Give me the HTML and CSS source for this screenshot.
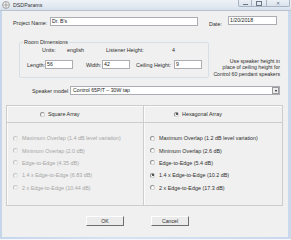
FILE: index.html
```html
<!DOCTYPE html>
<html lang="en">
<head>
  <meta charset="UTF-8" />
  <title>DSDParams</title>
  <link rel="stylesheet" href="styles.css">
</head>
<body>
  <div class="window">
    <div class="titlebar">
      <svg class="app-icon" width="8" height="8" viewBox="0 0 8 8">
        <circle cx="4" cy="4" r="3.4" fill="#f4f4f4" stroke="#8c8c8c" stroke-width="0.8"/>
        <path d="M4 0.8V7.2M0.8 4H7.2" stroke="#9a9a9a" stroke-width="0.6"/>
        <circle cx="4" cy="4" r="1.2" fill="none" stroke="#a0a0a0" stroke-width="0.5"/>
      </svg>
      <span class="title">DSDParams</span>
      <div class="win-buttons">
        <div class="wbtn min"><span></span></div>
        <div class="wbtn max"><span></span></div>
        <div class="wbtn close">✕</div>
      </div>
    </div>

    <div class="client">
      <div class="row-top">
        <span class="lbl lbl-project">Project Name:</span>
        <div class="field field-project">Dr. B's</div>
        <span class="lbl lbl-date">Date:</span>
        <div class="field field-date">1/20/2018</div>
      </div>

      <div class="row-room">
        <fieldset class="room">
          <legend>Room Dimensions</legend>
          <div class="room-info">
            <span class="ri-units">Units:</span>
            <span class="ri-english">english</span>
            <span class="ri-listener">Listener Height:</span>
            <span>4</span>
          </div>
          <div class="room-inputs">
            <span class="lbl-len">Length:</span>
            <div class="field small">56</div>
            <span class="lbl-width">Width:</span>
            <div class="field small">42</div>
            <span class="lbl-ceil">Ceiling Height:</span>
            <div class="field small">9</div>
          </div>
        </fieldset>
        <div class="note">Use speaker height in<br>place of ceiling height for<br>Control 60 pendant speakers</div>
      </div>

      <div class="row-speaker">
        <span class="lbl-speaker">Speaker model</span>
        <div class="field select">
          <span>Control 65P/T – 30W tap</span>
          <div class="drop"><span></span></div>
        </div>
      </div>

      <div class="panels">
        <div class="panel panel-square">
          <div class="panel-head">
            <span class="radio"></span><span>Square Array</span>
          </div>
          <div class="panel-body disabled">
            <div class="opt"><span class="radio"></span>Maximum Overlap (1.4 dB level variation)</div>
            <div class="opt"><span class="radio"></span>Minimum Overlap (2.0 dB)</div>
            <div class="opt"><span class="radio"></span>Edge-to-Edge (4.35 dB)</div>
            <div class="opt"><span class="radio"></span>1.4 x Edge-to-Edge (6.83 dB)</div>
            <div class="opt"><span class="radio"></span>2 x Edge-to-Edge (10.44 dB)</div>
          </div>
        </div>
        <div class="panel panel-hex">
          <div class="panel-head">
            <span class="radio checked"></span><span>Hexagonal Array</span>
          </div>
          <div class="panel-body">
            <div class="opt"><span class="radio"></span>Maximum Overlap (1.2 dB level variation)</div>
            <div class="opt"><span class="radio"></span>Minimum Overlap (2.6 dB)</div>
            <div class="opt"><span class="radio"></span>Edge-to-Edge (5.4 dB)</div>
            <div class="opt"><span class="radio checked"></span>1.4 x Edge-to-Edge (10.2 dB)</div>
            <div class="opt"><span class="radio"></span>2 x Edge-to-Edge (17.3 dB)</div>
          </div>
        </div>
      </div>

      <div class="row-buttons">
        <div class="btn">OK</div>
        <div class="btn">Cancel</div>
      </div>
    </div>
  </div>
</body>
</html>
```

FILE: styles.css
```css
body { margin: 0; width: 291px; height: 240px; overflow: hidden; background: #f4f7fb; font-family: "Liberation Sans", Arial, sans-serif; font-size: 5.4px; color: #2e2e2e; white-space: nowrap; }
.window { height: 239px; display: flex; flex-direction: column; background: linear-gradient(90deg, #c6d6ea, #d7e3f1 40%, #c9d8eb); }
.titlebar { height: 11px; display: flex; align-items: center; position: relative; background: linear-gradient(180deg, #eef2f7, #e1e8f1 70%, #d6dfea); border-bottom: 1px solid #b9c4d2; box-sizing: border-box; }
.app-icon { margin-left: 2px; margin-top: -1px; }
.title { margin-left: 3px; margin-top: -1px; color: #333; font-size: 5.3px; }
.win-buttons { display: flex; margin-left: auto; align-self: flex-start; margin-right: 1px; }
.wbtn { height: 7px; border: 1px solid #a7b3c2; border-top: none; box-sizing: border-box; background: linear-gradient(180deg, #edf1f6, #d9e1eb); display: flex; align-items: center; justify-content: center; color: #6b7787; }
.wbtn.min { width: 14px; border-radius: 0 0 0 2px; }
.wbtn.min span { width: 5px; height: 1px; background: #6b7787; margin-top: 2px; }
.wbtn.max { width: 15px; border-left: none; }
.wbtn.max span { width: 4px; height: 3px; border: 1px solid #6b7787; border-top-width: 1.5px; }
.wbtn.close { width: 23px; border-left: none; border-radius: 0 0 2px 0; font-size: 5px; }
.client { flex: 1; margin: 0 3px 2px 2px; background: #f0f0f0; }

.field { background: #fff; border: 1px solid #abadb3; box-sizing: border-box; height: 9px; line-height: 7px; padding-left: 1px; font-size: 5.2px; color: #222; }

.row-top { display: flex; align-items: flex-start; padding-left: 11px; margin-top: 5px; height: 10px; }
.lbl { line-height: 7px; margin-top: 4px; }
.lbl-project { width: 35px; margin-right: 2px; }
.field-project { width: 148px; margin-top: 1px; }
.lbl-date { margin-left: 11px; width: 14px; margin-right: 5px; margin-top: 5px; }
.field-date { width: 49px; }

.row-room { display: flex; padding-left: 17px; margin-top: 13px; }
.room { margin: 0; padding: 0 0 8px 0; width: 190px; box-sizing: border-box; border: 1px solid #d5dfe5; border-radius: 2px; }
.room legend { margin-left: 3px; padding: 0 1px; line-height: 7px; }
.room-info { display: flex; line-height: 7px; padding-left: 22px; margin-top: 1px; }
.ri-units { width: 25px; }
.ri-english { width: 39px; }
.ri-listener { width: 66px; }
.room-inputs { display: flex; align-items: center; padding-left: 7px; margin-top: 6px; }
.room-inputs .small { width: 28px; }
.lbl-len { width: 17px; margin-right: 1px; }
.lbl-width { width: 15px; margin-left: 13px; margin-right: 1px; }
.lbl-ceil { width: 37px; margin-left: 6px; margin-right: 1px; }
.note { margin-left: auto; margin-right: 8px; align-self: flex-end; margin-bottom: 1px; text-align: right; line-height: 6.5px; font-size: 5.2px; }

.row-speaker { display: flex; align-items: center; padding-left: 30px; margin-top: 8px; }
.lbl-speaker { width: 36px; margin-right: 2px; }
.select { width: 210px; display: flex; align-items: center; padding-left: 2px; }
.select .drop { margin-left: auto; margin-right: 0; width: 7px; height: 7px; box-sizing: border-box; border: 1px solid #9a9a9a; background: #ececec; display: flex; align-items: center; justify-content: center; }
.drop span { width: 0; height: 0; border-left: 1.5px solid transparent; border-right: 1.5px solid transparent; border-top: 2px solid #111; }

.panels { display: flex; padding-left: 4px; margin-top: 10px; }
.panel { height: 101px; box-sizing: border-box; border: 1px solid #cdcdcd; box-shadow: inset 1px 1px #fbfbfb; }
.panel-square { width: 138px; }
.panel-hex { width: 140px; margin-left: -1px; }
.panel-head { height: 17px; display: flex; align-items: center; border-bottom: 1px solid #cdcdcd; box-sizing: border-box; gap: 3px; }
.panel-square .panel-head { padding-left: 33px; }
.panel-hex .panel-head { padding-left: 30px; }
.panel-body { padding-top: 9px; padding-left: 6px; }
.opt { height: 12.35px; display: flex; align-items: center; gap: 4px; }
.radio { width: 5px; height: 5px; border-radius: 50%; border: 1px solid #8e8f8f; border-right-color: #d0d0d0; border-bottom-color: #d0d0d0; background: #fff; box-sizing: border-box; display: inline-flex; align-items: center; justify-content: center; flex: none; }
.radio.checked::after { content: ""; width: 2px; height: 2px; border-radius: 50%; background: #222; }
.disabled { color: #a6a6a6; }
.disabled .radio { border-color: #c4c4c4; border-right-color: #e4e4e4; border-bottom-color: #e4e4e4; background: #f4f4f4; }

.row-buttons { display: flex; padding-left: 84px; margin-top: 10px; gap: 27px; }
.btn { width: 38px; height: 10px; box-sizing: border-box; border: 1px solid #fdfdfd; border-right-color: #6e6e6e; border-bottom-color: #6e6e6e; background: #ebebeb; display: flex; align-items: center; justify-content: center; font-size: 5.2px; }
```
